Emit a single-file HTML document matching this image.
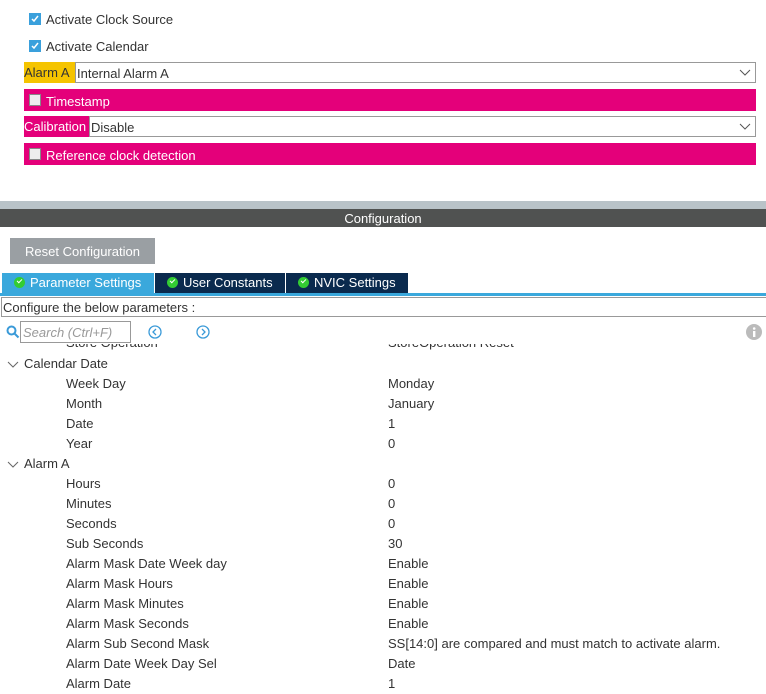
<!DOCTYPE html>
<html><head><style>
body{margin:0;width:766px;height:694px;overflow:hidden;background:#fff;font-family:"Liberation Sans",Arial,sans-serif;font-size:13px;color:#333;position:relative}
.a{position:absolute;white-space:nowrap}
.cb{position:absolute;width:12px;height:12px;border:1px solid #888;background:#eee;box-sizing:border-box}
.cbc{background:#3aa0dc;border-color:#3aa0dc}
.pink{position:absolute;left:24px;width:732px;height:22px;background:#e4007a;color:#fff}
.sel{position:absolute;height:21px;border:1px solid #999;background:#fff;box-sizing:border-box}
.row{position:absolute;height:20px;line-height:20px}
.tab{position:absolute;top:273px;height:20px;line-height:20px;color:#fff;font-size:13px;background:#0a2a4e}
.ck{display:inline-block;width:11px;height:11px;border-radius:50%;background:#3c3;vertical-align:-1px;margin:0 5px 0 12px;position:relative}
.ck:after{content:"";position:absolute;left:3px;top:2px;width:4px;height:2px;border-left:1.5px solid #fff;border-bottom:1.5px solid #fff;transform:rotate(-45deg)}
</style></head><body>
<div class="cb cbc" style="left:29px;top:13px"><svg width="10" height="10" style="position:absolute;left:0;top:0"><path d="M2 5l2 2l4-5" stroke="#fff" stroke-width="1.5" fill="none"/></svg></div>
<div class="a" style="left:46px;top:12px">Activate Clock Source</div>
<div class="cb cbc" style="left:29px;top:40px"><svg width="10" height="10" style="position:absolute;left:0;top:0"><path d="M2 5l2 2l4-5" stroke="#fff" stroke-width="1.5" fill="none"/></svg></div>
<div class="a" style="left:46px;top:39px">Activate Calendar</div>

<div class="a" style="left:24px;top:62px;height:21px;width:51px;background:#f5c400;line-height:22px">Alarm A</div>
<div class="sel" style="left:75px;top:62px;width:681px;line-height:21px;padding-left:1px">Internal Alarm A<svg class="a" style="right:4px;top:6px" width="12" height="8"><path d="M1 1l5 5l5-5" stroke="#555" fill="none"/></svg></div>

<div class="pink" style="top:89px"><div class="cb" style="left:5px;top:5px"></div><div class="a" style="left:22px;top:5px">Timestamp</div></div>

<div class="a" style="left:24px;top:116px;height:21px;width:65px;background:#e4007a;color:#fff;line-height:22px">Calibration</div>
<div class="sel" style="left:89px;top:116px;width:667px;line-height:21px;padding-left:1px">Disable<svg class="a" style="right:4px;top:6px" width="12" height="8"><path d="M1 1l5 5l5-5" stroke="#555" fill="none"/></svg></div>

<div class="pink" style="top:143px"><div class="cb" style="left:5px;top:5px"></div><div class="a" style="left:22px;top:5px">Reference clock detection</div></div>

<div class="a" style="left:0;top:201px;width:766px;height:8px;background:#b9c3c8"></div>
<div class="a" style="left:0;top:209px;width:766px;height:18px;background:#505251;color:#fff;text-align:center;line-height:19px">Configuration</div>

<div class="a" style="left:10px;top:238px;width:145px;height:26px;background:#9a9fa3;color:#fff;text-align:center;line-height:27px;font-size:13px">Reset Configuration</div>

<div class="tab" style="left:2px;width:152px;background:#3aa8dc"><span class="ck"></span>Parameter Settings</div>
<div class="tab" style="left:155px;width:130px"><span class="ck"></span>User Constants</div>
<div class="tab" style="left:286px;width:122px"><span class="ck"></span>NVIC Settings</div>
<div class="a" style="left:0;top:293px;width:766px;height:3px;background:#3aa8dc"></div>
<div class="a" style="left:1px;top:297px;width:765px;height:20px;border:1px solid #999;border-right:none;line-height:20px;box-sizing:border-box;padding-left:1px">Configure the below parameters :</div>

<svg class="a" style="left:6px;top:325px" width="14" height="14"><circle cx="5.5" cy="5.5" r="4" stroke="#3a9ad8" stroke-width="2" fill="none"/><path d="M8.5 8.5l4 4" stroke="#3a9ad8" stroke-width="2"/></svg>
<div class="a" style="left:20px;top:321px;width:111px;height:22px;border:1px solid #999;box-sizing:border-box;color:#999;font-style:italic;line-height:21px;padding-left:2px">Search (Ctrl+F)</div>
<svg class="a" style="left:148px;top:325px" width="14" height="14"><circle cx="7" cy="7" r="6" stroke="#3a9ad8" stroke-width="1.3" fill="none"/><path d="M8 4l-3 3l3 3" stroke="#3a9ad8" stroke-width="1.3" fill="none"/></svg>
<svg class="a" style="left:196px;top:325px" width="14" height="14"><circle cx="7" cy="7" r="6" stroke="#3a9ad8" stroke-width="1.3" fill="none"/><path d="M6 4l3 3l-3 3" stroke="#3a9ad8" stroke-width="1.3" fill="none"/></svg>
<svg class="a" style="left:746px;top:324px" width="16" height="16"><circle cx="8" cy="8" r="8" fill="#bbb"/><rect x="7" y="7" width="2.4" height="6" fill="#fff"/><circle cx="8.2" cy="4.5" r="1.3" fill="#fff"/></svg>

<div class="a" style="left:0;top:344px;width:766px;height:6px;overflow:hidden"><div class="a" style="left:66px;top:-9px">Store Operation</div><div class="a" style="left:388px;top:-9px">StoreOperation Reset</div></div>

<div style="position:absolute;left:0;top:354px;width:766px">
<svg class="a" style="left:7px;top:7px" width="12" height="8"><path d="M1 1l5 5l5-5" stroke="#666" fill="none"/></svg>
<div class="row" style="left:24px;top:0">Calendar Date</div>
<div class="row" style="left:66px;top:20px">Week Day</div><div class="row" style="left:388px;top:20px">Monday</div>
<div class="row" style="left:66px;top:40px">Month</div><div class="row" style="left:388px;top:40px">January</div>
<div class="row" style="left:66px;top:60px">Date</div><div class="row" style="left:388px;top:60px">1</div>
<div class="row" style="left:66px;top:80px">Year</div><div class="row" style="left:388px;top:80px">0</div>
<svg class="a" style="left:7px;top:107px" width="12" height="8"><path d="M1 1l5 5l5-5" stroke="#666" fill="none"/></svg>
<div class="row" style="left:24px;top:100px">Alarm A</div>
<div class="row" style="left:66px;top:120px">Hours</div><div class="row" style="left:388px;top:120px">0</div>
<div class="row" style="left:66px;top:140px">Minutes</div><div class="row" style="left:388px;top:140px">0</div>
<div class="row" style="left:66px;top:160px">Seconds</div><div class="row" style="left:388px;top:160px">0</div>
<div class="row" style="left:66px;top:180px">Sub Seconds</div><div class="row" style="left:388px;top:180px">30</div>
<div class="row" style="left:66px;top:200px">Alarm Mask Date Week day</div><div class="row" style="left:388px;top:200px">Enable</div>
<div class="row" style="left:66px;top:220px">Alarm Mask Hours</div><div class="row" style="left:388px;top:220px">Enable</div>
<div class="row" style="left:66px;top:240px">Alarm Mask Minutes</div><div class="row" style="left:388px;top:240px">Enable</div>
<div class="row" style="left:66px;top:260px">Alarm Mask Seconds</div><div class="row" style="left:388px;top:260px">Enable</div>
<div class="row" style="left:66px;top:280px">Alarm Sub Second Mask</div><div class="row" style="left:388px;top:280px">SS[14:0] are compared and must match to activate alarm.</div>
<div class="row" style="left:66px;top:300px">Alarm Date Week Day Sel</div><div class="row" style="left:388px;top:300px">Date</div>
<div class="row" style="left:66px;top:320px">Alarm Date</div><div class="row" style="left:388px;top:320px">1</div>
</div>
</body></html>
